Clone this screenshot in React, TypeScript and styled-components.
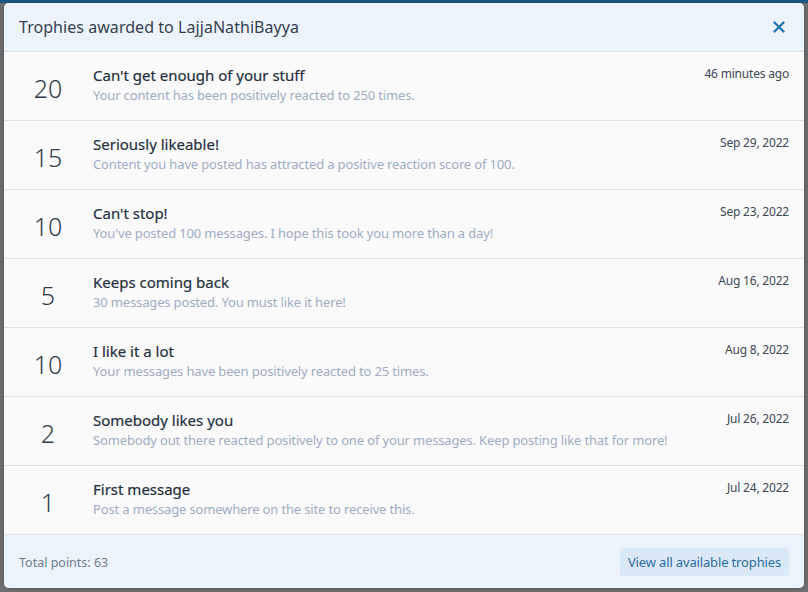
import styled, { createGlobalStyle } from "styled-components";

const GlobalStyle = createGlobalStyle`
  html, body {
    margin: 0;
    padding: 0;
    background: #707274;
    font-family: "Noto Sans", "Open Sans", sans-serif;
  }
  * {
    box-sizing: border-box;
  }
`;

const Backdrop = styled.div`
  width: 808px;
  height: 592px;
  padding: 0 4px 4px;
  border-top: 3px solid #1c5a86;
  background: #6e7072;
`;

const Overlay = styled.div`
  display: flex;
  flex-direction: column;
  height: 585px;
  border-radius: 5px;
  overflow: hidden;
  background: #fafafa;
  box-shadow: 0 0 6px rgba(0, 0, 0, 0.25);
`;

const Header = styled.div`
  display: flex;
  align-items: center;
  justify-content: space-between;
  height: 49px;
  padding: 0 17px 1px 15px;
  background: #edf3fb;
  border-bottom: 1px solid #d8e1ec;
`;

const Title = styled.h2`
  margin: 0;
  font-size: 16px;
  font-weight: 400;
  letter-spacing: 0.05px;
  color: #363f4f;
`;

const CloseButton = styled.button`
  border: none;
  background: none;
  padding: 0;
  width: 16px;
  height: 16px;
  display: flex;
  align-items: center;
  justify-content: center;
  cursor: pointer;
`;

const List = styled.ol`
  list-style: none;
  margin: 0;
  padding: 0;
`;

const Row = styled.li`
  display: flex;
  height: 69px;
  padding: 12px 15px 0 8px;
  border-bottom: 1px solid #dee4ec;
  background: #fafafa;
`;

const Points = styled.div`
  width: 72px;
  padding-top: 7px;
  text-align: center;
  font-size: 25px;
  font-weight: 300;
  color: #323c4c;
  flex-shrink: 0;
`;

const Body = styled.div`
  flex: 1;
  padding-left: 9px;
`;

const TrophyName = styled.h3`
  margin: 0;
  font-size: 15px;
  font-weight: 400;
  line-height: 22px;
  color: #253040;
  -webkit-text-stroke: 0.2px #253040;
`;

const TrophyText = styled.div`
  font-size: 13px;
  letter-spacing: -0.15px;
  line-height: 18px;
  color: #9eadc4;
`;

const Awarded = styled.time`
  padding-top: 1px;
  font-size: 12px;
  letter-spacing: -0.2px;
  line-height: 18px;
  color: #3e4858;
  white-space: nowrap;
`;

const Footer = styled.div`
  flex: 1;
  display: flex;
  align-items: center;
  justify-content: space-between;
  padding: 0 15px;
  background: #edf3fb;
`;

const Total = styled.span`
  padding-top: 2px;
  font-size: 12.5px;
  color: #717d8e;
`;

const FooterButton = styled.a`
  display: inline-flex;
  align-items: center;
  height: 28px;
  margin-top: 1px;
  padding: 0 8px;
  border-radius: 4px;
  background: #dbe8f5;
  color: #2d6ca3;
  font-size: 13px;
  letter-spacing: -0.15px;
  text-decoration: none;
`;

const trophies = [
  { points: 20, name: "Can't get enough of your stuff", text: "Your content has been positively reacted to 250 times.", date: "46 minutes ago" },
  { points: 15, name: "Seriously likeable!", text: "Content you have posted has attracted a positive reaction score of 100.", date: "Sep 29, 2022" },
  { points: 10, name: "Can't stop!", text: "You've posted 100 messages. I hope this took you more than a day!", date: "Sep 23, 2022" },
  { points: 5, name: "Keeps coming back", text: "30 messages posted. You must like it here!", date: "Aug 16, 2022" },
  { points: 10, name: "I like it a lot", text: "Your messages have been positively reacted to 25 times.", date: "Aug 8, 2022" },
  { points: 2, name: "Somebody likes you", text: "Somebody out there reacted positively to one of your messages. Keep posting like that for more!", date: "Jul 26, 2022" },
  { points: 1, name: "First message", text: "Post a message somewhere on the site to receive this.", date: "Jul 24, 2022" },
];

export default function App() {
  return (
    <>
      <GlobalStyle />
      <Backdrop>
        <Overlay>
          <Header>
            <Title>Trophies awarded to LajjaNathiBayya</Title>
            <CloseButton aria-label="Close">
              <svg width="12" height="12" viewBox="0 0 12 12">
                <path d="M1.5 1.5 L10.5 10.5 M10.5 1.5 L1.5 10.5" stroke="#2577b1" strokeWidth="2.4" strokeLinecap="round" />
              </svg>
            </CloseButton>
          </Header>
          <List>
            {trophies.map((t) => (
              <Row key={t.name}>
                <Points>{t.points}</Points>
                <Body>
                  <TrophyName>{t.name}</TrophyName>
                  <TrophyText>{t.text}</TrophyText>
                </Body>
                <Awarded>{t.date}</Awarded>
              </Row>
            ))}
          </List>
          <Footer>
            <Total>Total points: 63</Total>
            <FooterButton href="#">View all available trophies</FooterButton>
          </Footer>
        </Overlay>
      </Backdrop>
    </>
  );
}
